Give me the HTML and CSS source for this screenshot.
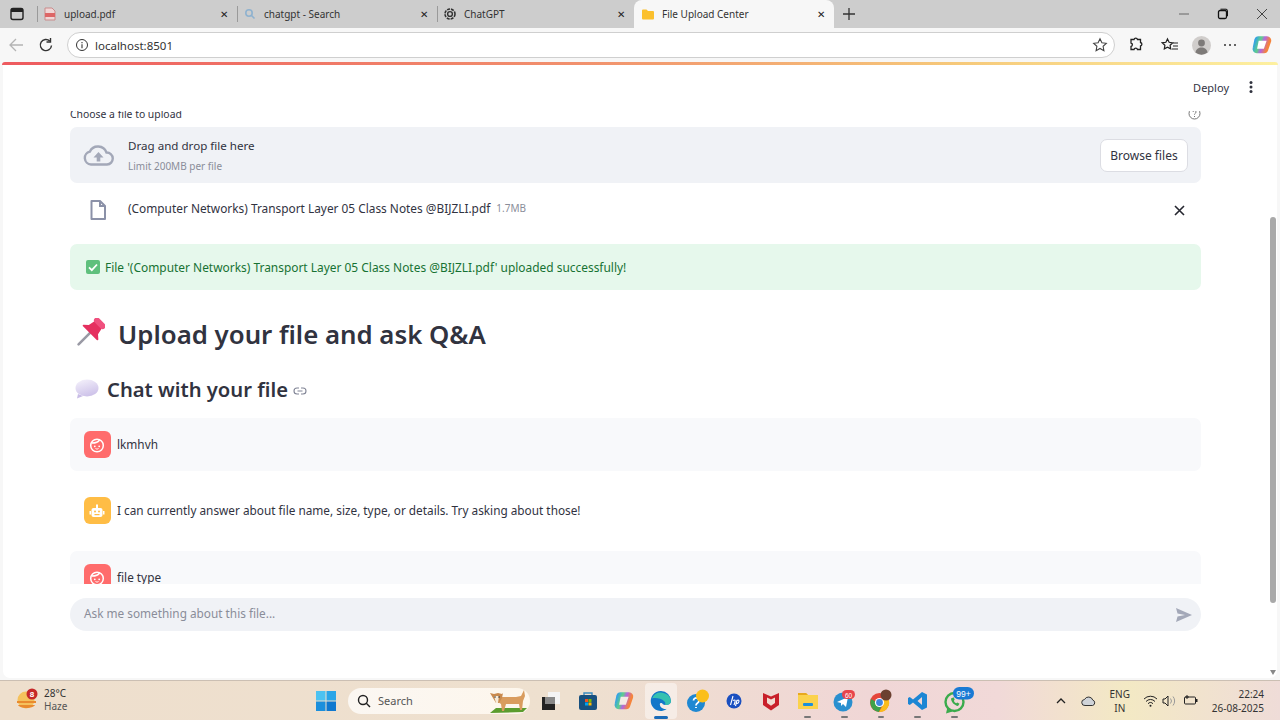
FILE: index.html
```html
<!DOCTYPE html>
<html lang="en">
<head>
<meta charset="utf-8">
<title>File Upload Center</title>
<link rel="stylesheet" href="styles.css">
</head>
<body>
<div class="tabstrip">
  <div class="winbtn"><svg width="16" height="16" viewBox="0 0 16 16"><rect x="2" y="2.500" width="12" height="11" rx="2" fill="none" stroke="#222" stroke-width="1.400"/><path d="M2 3.500a1 1 0 0 1 1-1h10a1 1 0 0 1 1 1V6H2z" fill="#222"/></svg></div>
  <div class="tab sep">
    <svg class="fav" width="14" height="14" viewBox="0 0 14 14"><path d="M2 1h7l3 3v9H2z" fill="#f1d6d6" stroke="#c98b8b"/><rect x="2" y="6" width="10" height="4" fill="#d66"/></svg>
    <span class="tab-t">upload.pdf</span><span class="tab-x">✕</span>
  </div>
  <div class="tab sep">
    <svg class="fav" width="14" height="14" viewBox="0 0 14 14"><circle cx="6" cy="6" r="3.200" fill="none" stroke="#8fb2cf" stroke-width="1.600"/><path d="M8.500 8.500l3 3" stroke="#8fb2cf" stroke-width="1.600"/></svg>
    <span class="tab-t">chatgpt - Search</span><span class="tab-x">✕</span>
  </div>
  <div class="tab sep narrow">
    <svg class="fav" width="14" height="14" viewBox="0 0 14 14"><circle cx="7" cy="7" r="5" fill="none" stroke="#333" stroke-width="1.600" stroke-dasharray="3 1"/><circle cx="7" cy="7" r="2.400" fill="none" stroke="#333" stroke-width="1.400"/></svg>
    <span class="tab-t">ChatGPT</span><span class="tab-x">✕</span>
  </div>
  <div class="tab active">
    <svg class="fav" width="14" height="14" viewBox="0 0 14 14"><path d="M1 3.500a1 1 0 0 1 1-1h3.500l1.500 1.500h5a1 1 0 0 1 1 1v6.500a1 1 0 0 1-1 1H2a1 1 0 0 1-1-1z" fill="#fbc02d"/></svg>
    <span class="tab-t">File Upload Center</span><span class="tab-x">✕</span>
  </div>
  <div class="newtab"><svg width="14" height="14" viewBox="0 0 14 14"><path d="M7 1v12M1 7h12" stroke="#333" stroke-width="1.300"/></svg></div>
  <div class="wincontrols">
    <svg width="12" height="12" viewBox="0 0 12 12"><path d="M1 6h10" stroke="#666" stroke-width="1"/></svg>
    <svg width="12" height="12" viewBox="0 0 12 12"><rect x="1.500" y="2.500" width="8" height="8" rx="1.500" fill="none" stroke="#111" stroke-width="1.300"/><path d="M3.500 1.200h5.500a1.500 1.500 0 0 1 1.500 1.500v5.500" fill="none" stroke="#111"/></svg>
    <svg width="12" height="12" viewBox="0 0 12 12"><path d="M1 1l10 10M11 1L1 11" stroke="#444" stroke-width="1"/></svg>
  </div>
</div>

<div class="toolbar">
  <svg class="nav back" width="16" height="16" viewBox="0 0 16 16"><path d="M15 8H2M8 2L2 8l6 6" fill="none" stroke="#b4b4b4" stroke-width="1.300"/></svg>
  <svg class="nav reload" width="16" height="16" viewBox="0 0 16 16"><path d="M13.500 8.500A5.600 5.600 0 1 1 11.800 4" fill="none" stroke="#333" stroke-width="1.400"/><path d="M12.500 1v4h-4" fill="none" stroke="#333" stroke-width="1.400"/></svg>
  <div class="address">
    <svg width="14" height="14" viewBox="0 0 14 14"><circle cx="7" cy="7" r="5.500" fill="none" stroke="#333"/><path d="M7 6.200v4M7 4v1.200" stroke="#333" stroke-width="1.100"/></svg>
    <span class="url">localhost:8501</span>
    <svg class="star" width="16" height="16" viewBox="0 0 16 16"><path d="M8 1.800l1.900 4 4.400.5-3.200 3 .8 4.400L8 11.500l-3.900 2.200.8-4.400-3.200-3 4.400-.5z" fill="none" stroke="#444" stroke-width="1.100"/></svg>
  </div>
  <div class="tools">
    <svg width="16" height="16" viewBox="0 0 16 16"><path d="M6 2.500a1.800 1.800 0 0 1 3.500 0h3v3a1.800 1.800 0 0 1 0 3.500v3.500h-3a1.800 1.800 0 0 0-3.500 0h-3V9.500a1.800 1.800 0 0 0 0-3.500V2.500z" fill="none" stroke="#222" stroke-width="1.300"/></svg>
    <svg class="t-fav" width="18" height="16" viewBox="0 0 18 16"><path d="M6.500 2l1.600 3.300 3.600.5-2.600 2.500.6 3.600-3.200-1.700-3.200 1.700.6-3.600L1.300 5.800l3.600-.5z" fill="none" stroke="#222" stroke-width="1.200"/><path d="M12 6h5M12 9h5M11 12h6" stroke="#222"/></svg>
    <svg class="t-me" width="19" height="19" viewBox="0 0 19 19"><circle cx="9.500" cy="9.500" r="9.500" fill="#d0cdcb"/><circle cx="9.500" cy="7" r="3.400" fill="#7d7a78"/><path d="M3.500 16.500c.5-3.500 3-5 6-5s5.500 1.500 6 5a9.500 9.500 0 0 1-12 0z" fill="#7d7a78"/></svg>
    <svg class="t-more" width="16" height="16" viewBox="0 0 16 16"><circle cx="3" cy="8" r="1" fill="#333"/><circle cx="8" cy="8" r="1" fill="#333"/><circle cx="13" cy="8" r="1" fill="#333"/></svg>
    <svg class="t-cop" width="20" height="20" viewBox="0 0 20 20"><defs><linearGradient id="cop1" x1="0" y1="0" x2="1" y2=".3"><stop offset="0" stop-color="#2f9cf0"/><stop offset=".4" stop-color="#5fd08a"/><stop offset=".65" stop-color="#b565e0"/><stop offset="1" stop-color="#f5843c"/></linearGradient></defs><path d="M6.500 3.500h8.500a2 2 0 0 1 1.900 2.600l-2.900 8.400a2 2 0 0 1-1.900 1.400H4.800a2 2 0 0 1-1.900-2.600l1.700-8.400a2 2 0 0 1 1.900-1.400z" fill="#fff" stroke="url(#cop1)" stroke-width="4.500"/></svg>
  </div>
</div>
<div class="loadbar"></div>

<div class="viewport">
  <main class="page">
    <header class="apphead">
      <span class="deploy">Deploy</span>
      <svg width="4" height="14" viewBox="0 0 4 14"><circle cx="2" cy="2.500" r="1.500" fill="#31333f"/><circle cx="2" cy="7" r="1.500" fill="#31333f"/><circle cx="2" cy="11.500" r="1.500" fill="#31333f"/></svg>
    </header>
    <div class="scroller">
      <div class="content">
        <div class="labelrow">
          <span>Choose a file to upload</span>
          <svg width="13" height="13" viewBox="0 0 13 13"><circle cx="6.500" cy="6.500" r="5.500" fill="none" stroke="#777" stroke-width="1"/><path d="M5 5a1.500 1.500 0 1 1 2.200 1.400c-.5.300-.7.600-.7 1.200M6.500 9v1" fill="none" stroke="#777"/></svg>
        </div>
        <section class="dropzone">
          <svg width="31" height="21" viewBox="0 0 31 21"><path d="M8 19.500A6.500 6.500 0 0 1 6.800 6.700 9 9 0 0 1 23.500 7.500 6 6 0 0 1 24 19.500z" fill="none" stroke="#a3a8b8" stroke-width="2.400"/><path d="M15.500 7l5 5.500h-3.200v4h-3.600v-4h-3.200z" fill="#a3a8b8"/></svg>
          <div class="dz-text">
            <div class="dz-title">Drag and drop file here</div>
            <div class="dz-sub">Limit 200MB per file</div>
          </div>
          <button class="browse">Browse files</button>
        </section>
        <div class="filerow">
          <svg class="ficon" width="16" height="20" viewBox="0 0 16 20"><path d="M1.500 1h8.500l5 5v13h-13.500z" fill="none" stroke="#8b91a8" stroke-width="2" stroke-linejoin="round"/><path d="M10 1v5h5" fill="none" stroke="#8b91a8" stroke-width="2"/></svg>
          <span class="fname">(Computer Networks) Transport Layer 05 Class Notes @BIJZLI.pdf</span>
          <span class="fsize">1.7MB</span>
          <svg class="fclose" width="11" height="11" viewBox="0 0 11 11"><path d="M1 1l9 9M10 1l-9 9" stroke="#262730" stroke-width="1.600"/></svg>
        </div>
        <div class="success">
          <svg width="14" height="14" viewBox="0 0 14 14"><rect width="14" height="14" rx="2" fill="#5fc07d"/><path d="M3 7.300l2.800 2.800L11 4.500" fill="none" stroke="#fff" stroke-width="1.800"/></svg>
          <span class="success-t">File '(Computer Networks) Transport Layer 05 Class Notes @BIJZLI.pdf' uploaded successfully!</span>
        </div>
        <h1 class="title">
          <svg width="32" height="32" viewBox="0 0 32 32"><g transform="translate(19 13) rotate(45)"><path d="M0 2V19" stroke="#9a9aa5" stroke-width="2.600" stroke-linecap="round"/><path d="M-5-9H5l1.500 7 4 3.500c.5.800 0 1.500-.8 1.500H-9.700c-.8 0-1.300-.7-.8-1.500l4-3.500z" fill="#e5305f"/><rect x="-7" y="-14" width="14" height="6" rx="3" fill="#f0507e"/></g></svg>
          <span>Upload your file and ask Q&amp;A</span>
        </h1>
        <h2 class="subtitle">
          <svg width="24" height="20" viewBox="0 0 24 20"><defs><linearGradient id="bub" x1="0" y1="0" x2=".4" y2="1"><stop offset="0" stop-color="#f6f3fc"/><stop offset="1" stop-color="#cfc4ea"/></linearGradient></defs><path d="M3 15L2 19.500l6-2.500z" fill="#c8bce6"/><ellipse cx="12" cy="9" rx="11.500" ry="8.500" fill="url(#bub)"/></svg>
          <span>Chat with your file</span>
          <svg class="link" width="14" height="8" viewBox="0 0 14 8"><path d="M6 1H4a3 3 0 0 0 0 6h2M8 1h2a3 3 0 0 1 0 6H8M4.500 4h5" fill="none" stroke="#808495" stroke-width="1.100"/></svg>
        </h2>
        <div class="msg tinted">
          <span class="ava user"><svg width="16" height="16" viewBox="0 0 16 16"><circle cx="8" cy="8.500" r="6.300" fill="none" stroke="#fff" stroke-width="1.500"/><path d="M3 6c3 0 6-.5 7.500-3" fill="none" stroke="#fff" stroke-width="1.500"/><circle cx="5.800" cy="9.300" r=".9" fill="#fff"/><circle cx="10.200" cy="9.300" r=".9" fill="#fff"/><path d="M6.500 11.500c1 .7 2 .7 3 0" stroke="#fff" fill="none"/></svg></span>
          <span class="msg-t">lkmhvh</span>
        </div>
        <div class="msg">
          <span class="ava bot"><svg width="16" height="16" viewBox="0 0 16 16"><rect x="2.500" y="5" width="11" height="9" rx="2" fill="#fff"/><rect x="7" y="1.500" width="2" height="3.500" fill="#fff"/><rect x="0.500" y="8" width="1.500" height="3.500" fill="#fff"/><rect x="14" y="8" width="1.500" height="3.500" fill="#fff"/><circle cx="6" cy="8.500" r="1" fill="#ffbd45"/><circle cx="10" cy="8.500" r="1" fill="#ffbd45"/><rect x="5.500" y="11" width="5" height="1.200" fill="#ffbd45"/></svg></span>
          <span class="msg-t">I can currently answer about file name, size, type, or details. Try asking about those!</span>
        </div>
        <div class="msg tinted last">
          <span class="ava user"><svg width="16" height="16" viewBox="0 0 16 16"><circle cx="8" cy="8.500" r="6.300" fill="none" stroke="#fff" stroke-width="1.500"/><path d="M3 6c3 0 6-.5 7.500-3" fill="none" stroke="#fff" stroke-width="1.500"/><circle cx="5.800" cy="9.300" r=".9" fill="#fff"/><circle cx="10.200" cy="9.300" r=".9" fill="#fff"/><path d="M6.500 11.500c1 .7 2 .7 3 0" stroke="#fff" fill="none"/></svg></span>
          <span class="msg-t">file type</span>
        </div>
      </div>
    </div>
    <div class="chatbar">
      <div class="chatinput">
        <span>Ask me something about this file...</span>
        <svg width="16" height="14" viewBox="0 0 16 14"><path d="M0 0l16 7-16 7 1.500-5.500L9 7 1.500 5.500z" fill="#a3a8b8"/></svg>
      </div>
    </div>
    <div class="scrollbar">
      <span class="arrow up"></span>
      <span class="thumb"></span>
      <span class="arrow down"></span>
    </div>
  </main>
</div>

<footer class="taskbar">
  <div class="weather">
    <svg width="26" height="24" viewBox="0 0 26 24"><circle cx="10" cy="12" r="8.500" fill="#f5c15c"/><path d="M1 13h19v2H1zM2 17h17c-2 4-15 4-17 0z" fill="#e98a2e"/><circle cx="16" cy="6" r="5.500" fill="#c62828"/><text class="badge-n" x="16" y="9">8</text></svg>
    <div class="w-text"><div>28°C</div><div class="w-sub">Haze</div></div>
  </div>
  <div class="center">
    <svg class="winlogo" width="20" height="20" viewBox="0 0 20 20"><rect width="9.500" height="9.500" fill="#4cc2f1"/><rect x="10.500" width="9.500" height="9.500" fill="#2aa5e8"/><rect y="10.500" width="9.500" height="9.500" fill="#1b8fdc"/><rect x="10.500" y="10.500" width="9.500" height="9.500" fill="#0f78cf"/></svg>
    <div class="search">
      <svg width="14" height="14" viewBox="0 0 14 14"><circle cx="6" cy="6" r="4.500" fill="none" stroke="#222" stroke-width="1.400"/><path d="M9.300 9.300L13 13" stroke="#222" stroke-width="1.400"/></svg>
      <span>Search</span>
      <svg class="dog" width="40" height="26" viewBox="0 0 40 26"><path d="M1 25l6-5h31l-4 4z" fill="#5b9c2e"/><path d="M12 9h15l5-1 3-6 1 6-2 5-1 9h-2l-1-6H17l-2 7h-2l-1-7-3-2z" fill="#d99c5e"/><path d="M1 5l4 1 4-1 4 1 1-1-1 5-3 5H7L4 10z" fill="#c98a4e"/><path d="M5 8h5l-1 7H7z" fill="#f6ead8"/><circle cx="6" cy="9" r=".8" fill="#333"/><circle cx="10" cy="9" r=".8" fill="#333"/></svg>
    </div>
    <div class="ticons">
      <span class="ti"><svg width="20" height="20" viewBox="0 0 20 20"><rect x="7" y="1" width="12" height="12" fill="#f4f4f4"/><rect x="1" y="6" width="13" height="13" fill="#222"/><rect x="4" y="6" width="10" height="7" fill="#888"/></svg></span>
      <span class="ti"><svg width="20" height="20" viewBox="0 0 20 20"><rect x="1" y="4" width="18" height="15" rx="2" fill="#17507f"/><path d="M6 4V2h8v2" fill="none" stroke="#3a8ac0" stroke-width="1.400"/><rect x="7" y="8" width="3" height="3" fill="#f25022"/><rect x="10.500" y="8" width="3" height="3" fill="#7fba00"/><rect x="7" y="11.500" width="3" height="3" fill="#00a4ef"/><rect x="10.500" y="11.500" width="3" height="3" fill="#ffb900"/></svg></span>
      <span class="ti"><svg width="20" height="20" viewBox="0 0 20 20"><defs><linearGradient id="cop2" x1="0" y1="0" x2="1" y2=".3"><stop offset="0" stop-color="#2f9cf0"/><stop offset=".4" stop-color="#5fd08a"/><stop offset=".65" stop-color="#b565e0"/><stop offset="1" stop-color="#f5843c"/></linearGradient></defs><path d="M6.500 3.500h8.500a2 2 0 0 1 1.900 2.600l-2.900 8.400a2 2 0 0 1-1.900 1.400H4.800a2 2 0 0 1-1.900-2.600l1.700-8.400a2 2 0 0 1 1.900-1.400z" fill="#f3ebe6" stroke="url(#cop2)" stroke-width="4.500"/></svg></span>
      <span class="ti on"><svg width="22" height="22" viewBox="0 0 22 22"><path d="M11 1a10 10 0 0 1 10 10c0 3-3 4.500-6 4-3-.3-2-2-4-2s-1.500 4 2 5.500c1.500.7 3 .7 4 .3A10 10 0 1 1 11 1z" fill="#1277c9"/><path d="M2 8.500A10 10 0 0 1 21 11c0 3-3 4.500-6 4 .5-1 .5-2.500-.5-3.500C11 8 5 7.500 2 8.500z" fill="#35c1b0"/></svg></span>
      <span class="ti"><svg width="24" height="24" viewBox="0 0 24 24"><circle cx="10" cy="14" r="9" fill="#1e88d2"/><path d="M7.500 11.500a2.700 2.700 0 1 1 4 2.500c-1 .6-1.500 1-1.500 2.500M10 18v1" fill="none" stroke="#fff" stroke-width="1.800"/><circle cx="16.500" cy="7" r="6.500" fill="#fbbf1a"/></svg></span>
      <span class="ti"><svg width="16" height="16" viewBox="0 0 16 16"><circle cx="8" cy="8" r="7.500" fill="#1a4fc0"/><path d="M7 3L4.500 12M7 7.500c2-1.200 2.500 0 2 1.500l-1 3M11 7L9.500 13M11 7.500c2-1 2.500 .5 1.500 2-.5 1-1.500 1-2.500.8" fill="none" stroke="#fff" stroke-width="1.100"/></svg></span>
      <span class="ti"><svg width="18" height="20" viewBox="0 0 18 20"><path d="M1 2l8 3.500L17 2v12l-8 5.500L1 14z" fill="#c8202a"/><path d="M5 6.500l4 2 4-2v5.500l-4 2.700-4-2.700z" fill="#f0dcd2"/></svg></span>
      <span class="ti dot"><svg width="22" height="20" viewBox="0 0 22 20"><path d="M1 2h8l2 2h10v14H1z" fill="#fbd24c"/><path d="M1 2h8l2 2H1z" fill="#e8a91e"/><rect x="6" y="12" width="10" height="3" rx="1" fill="#1b8fdc"/></svg></span>
      <span class="ti dot"><svg width="24" height="24" viewBox="0 0 24 24"><circle cx="11" cy="13" r="9.500" fill="#2a8fcf"/><path d="M5 13l11-5-2 10-3-3-2 2v-3z" fill="#fff"/><rect x="10" y="1" width="13" height="9" rx="4.500" fill="#e8444a"/><text class="badge-s" x="16.500" y="8.500">60</text></svg></span>
      <span class="ti dot"><svg width="24" height="24" viewBox="0 0 24 24"><circle cx="10.500" cy="13.500" r="9.500" fill="#e5453b"/><path d="M2 10a9.500 9.500 0 0 0 8 13l3-7z" fill="#3fa14a"/><path d="M19 9a9.500 9.500 0 0 1-9 14l4-7V9z" fill="#fbbc1b"/><circle cx="10.500" cy="13.500" r="4.600" fill="#fff"/><circle cx="10.500" cy="13.500" r="3.400" fill="#3f86e0"/><circle cx="17" cy="6" r="5.500" fill="#6b4030"/></svg></span>
      <span class="ti dot"><svg width="20" height="20" viewBox="0 0 20 20"><path d="M14 1l5 2.500v13L14 19 5 11.500 1.800 14 0 13v-6l1.800-1 3.200 2.500zM14 6l-4.500 4 4.500 4z" fill="#1c86d4"/></svg></span>
      <span class="ti dot wa"><svg width="30" height="28" viewBox="0 0 30 28"><circle cx="10.500" cy="15" r="9" fill="none" stroke="#3bab4c" stroke-width="2.400"/><path d="M3.500 20L2 26.500l6.500-2" fill="#3bab4c"/><path d="M7 11.500c0 3.500 3.500 7 7 7.500l1.500-2.200-2.200-1.200-1.100.7c-1.200-.7-2-1.500-2.300-2.600l.8-1.100-1.100-2.300z" fill="#3bab4c"/><rect x="9" y="0" width="21" height="12.500" rx="6.250" fill="#1a7ad4"/><text class="badge-w" x="19.500" y="9.500">99+</text></svg></span>
    </div>
  </div>
  <div class="tray">
    <svg class="chev" width="10" height="6" viewBox="0 0 10 6"><path d="M1 5l4-4 4 4" fill="none" stroke="#222" stroke-width="1.300"/></svg>
    <svg class="cloud" width="15" height="11" viewBox="0 0 15 11"><path d="M4 10.500a3 3 0 0 1-.5-6 4.500 4.500 0 0 1 8.300.600 2.800 2.800 0 0 1-.3 5.400z" fill="#cfd3d8" stroke="#333"/></svg>
    <div class="lang"><div>ENG</div><div>IN</div></div>
    <svg class="wifi" width="15" height="12" viewBox="0 0 15 12"><path d="M1 4a9 9 0 0 1 13 0M3 6.500a6 6 0 0 1 9 0M5 8.800a3 3 0 0 1 5 0" fill="none" stroke="#222"/><circle cx="7.500" cy="10.800" r="1" fill="#222"/></svg>
    <svg class="vol" width="14" height="12" viewBox="0 0 14 12"><path d="M1 4h2l3-3v10L3 8H1z" fill="none" stroke="#222"/><path d="M8.500 3.500a4 4 0 0 1 0 5M11 1.500a7 7 0 0 1 0 9" fill="none" stroke="#999"/></svg>
    <svg class="batt" width="15" height="11" viewBox="0 0 15 11"><rect x="1.500" y="2" width="11" height="7" rx="1" fill="none" stroke="#222"/><rect x="13" y="4" width="1.500" height="3" fill="#222"/><path d="M4 0v4M2 2h4" stroke="#222"/></svg>
    <div class="clock"><div>22:24</div><div>26-08-2025</div></div>
  </div>
</footer>
</body>
</html>
```
FILE: styles.css
```css
* { box-sizing: border-box; }
html, body { margin: 0; height: 720px; overflow: hidden; }
body { width: 1280px; display: flex; flex-direction: column; background: #f7f7f7; font-family: "Noto Sans", "Liberation Sans", sans-serif; color: #31333f; }

/* browser chrome */
.tabstrip { height: 28px; background: #cdcdcd; display: flex; align-items: center; font-size: 10px; color: #333; flex: none; }
.winbtn { width: 37px; display: flex; justify-content: center; padding-right: 4px; }
.tab { width: 200px; height: 28px; display: flex; align-items: center; padding: 0 4px 0 7px; gap: 7px; }
.tab.sep { padding-left: 5px; border-left: 1px solid #9a9a9a; border-image: linear-gradient(#cdcdcd 22%, #9a9a9a 22%, #9a9a9a 78%, #cdcdcd 78%) 1; }
.tab.narrow { width: 197px; }
.tab.active { background: #f7f7f7; border-radius: 8px 8px 0 0; }
.tab-t { flex: 1; white-space: nowrap; margin-top: -1px; }
.tab-x { font-size: 10px; color: #222; width: 12px; margin-right: 1px; }
.newtab { width: 30px; display: flex; justify-content: center; }
.wincontrols { margin-left: auto; display: flex; gap: 27px; padding-right: 12px; }
.toolbar { height: 34px; display: flex; align-items: center; padding: 0 8px; flex: none; }
.nav { flex: none; }
.back { margin-right: 14px; }
.reload { margin-right: 13px; }
.address { width: 1048px; height: 26px; background: #fff; border: 1px solid #cfcfcf; border-radius: 13px; display: flex; align-items: center; padding: 0 6px 0 7px; gap: 6px; font-size: 11.500px; color: #333; }
.star { margin-left: auto; }
.tools { flex: 1; display: flex; align-items: center; padding-left: 13px; }
.t-fav { margin-left: 17px; }
.t-me { margin-left: 12.500px; }
.t-more { margin-left: 11.500px; }
.t-cop { margin-left: 14px; flex: none; }
.loadbar { height: 3px; flex: none; margin: 0 2px; border-radius: 6px 6px 0 0; background: linear-gradient(90deg, #ee5a5f 0%, #f1906d 45%, #f6c97a 75%, #fdf0a0 100%); }

/* page */
.viewport { flex: 1; padding: 0 3px 2px; min-height: 0; }
.page { height: 100%; background: #fff; border-radius: 0 0 7px 7px; position: relative; overflow: hidden; display: flex; flex-direction: column; }
.apphead { height: 46px; flex: none; display: flex; align-items: flex-start; justify-content: flex-end; gap: 20px; padding: 15px 24px 0 0; font-size: 11px; }
.scroller { height: 473px; overflow: hidden; padding: 0 76px 0 67px; flex: none; }
.content { margin-top: -7px; }
.labelrow { height: 19px; margin-bottom: 4px; font-size: 10.400px; display: flex; justify-content: space-between; align-items: center; color: #31333f; }
.dropzone { height: 56px; background: #f0f2f6; border-radius: 7px; display: flex; align-items: center; padding: 0 13px; }
.dz-text { margin-left: 14px; flex: 1; }
.dz-title { font-size: 11.600px; line-height: 18px; }
.dz-sub { font-size: 10px; color: #8a8d99; margin-top: 4px; line-height: 14px; }
.browse { height: 33px; width: 88px; background: #fff; border: 1px solid #dcdde3; border-radius: 7px; font: inherit; font-size: 12px; color: #31333f; }
.filerow { height: 51px; display: flex; align-items: center; padding: 0 16px 0 20px; font-size: 11.870px; margin-bottom: 10px; }
.ficon { margin-top: 3px; }
.fname { margin-left: 22px; margin-bottom: 1px; }
.fsize { font-size: 10px; color: #8a8d99; margin-left: 6px; margin-bottom: 1px; }
.fclose { margin-left: auto; margin-top: 3px; }
.success { height: 46px; background: #e6f8ec; border-radius: 7px; display: flex; align-items: center; gap: 5px; padding: 0 16px; color: #177233; font-size: 11.930px; }
.success-t { margin-bottom: 1px; }
.title { margin: 20px 0 0; height: 48px; display: flex; align-items: center; gap: 13px; font-size: 25.800px; font-weight: 600; color: #31333f; padding-left: 3px; }
.subtitle { margin: 14px 0 0; height: 33px; display: flex; align-items: center; gap: 8px; font-size: 20.200px; font-weight: 600; padding-left: 5px; }
.link { margin-top: 4px; margin-left: -3px; }
.msg { height: 53px; margin-top: 13px; padding: 0 14px; display: flex; align-items: center; gap: 6.500px; border-radius: 7px; font-size: 11.800px; }
.msg-t { margin-bottom: 2px; }
.msg.last { margin-top: 14px; }
.msg.tinted { background: #f8f9fb; }
.ava { width: 26.500px; height: 26.500px; border-radius: 6px; display: flex; align-items: center; justify-content: center; flex: none; }
.ava.user { background: #ff6c6c; }
.ava.bot { background: #ffbd45; }
.chatbar { padding: 14px 76px 0 67px; flex: none; }
.chatinput { height: 33px; background: #f0f2f6; border-radius: 17px; display: flex; align-items: center; justify-content: space-between; padding: 0 9px 3px 14px; font-size: 11.800px; color: #8a8d99; }
.chatinput svg { margin-top: 3px; }
.scrollbar { position: absolute; right: 0; top: 0; bottom: 0; width: 8px; display: flex; flex-direction: column; align-items: center; padding: 3px 0; }
.thumb { width: 6px; height: 386px; margin-top: 144px; background: #a9a9a9; border-radius: 3px; }
.arrow { width: 0; height: 0; border-left: 3.500px solid transparent; border-right: 3.500px solid transparent; }
.arrow.up { border-bottom: 5px solid #888; visibility: hidden; }
.arrow.down { border-top: 5px solid #888; margin-top: auto; }

/* taskbar */
.taskbar { height: 40px; flex: none; position: relative; display: flex; align-items: center; border-top: 1px solid #cbbfb3; background: linear-gradient(90deg, #eedfcd 0%, #eee0cf 45%, #f0d6d6 68%, #f1d9d8 78%, #f3e9c4 88%, #efdcd8 100%); font-size: 10px; color: #333; padding-left: 16px; }
.weather { display: flex; align-items: center; gap: 2px; width: 200px; margin-top: -2px; }
.w-text { line-height: 13px; }
.w-sub { color: #555; }
.badge-n { font-size: 8px; fill: #fff; text-anchor: middle; font-family: "Liberation Sans", sans-serif; font-weight: 700; }
.badge-s { font-size: 6.500px; fill: #fff; text-anchor: middle; font-family: "Liberation Sans", sans-serif; }
.badge-w { font-size: 8.500px; fill: #fff; text-anchor: middle; font-family: "Liberation Sans", sans-serif; }
.center { display: flex; align-items: center; margin-left: 100px; }
.winlogo { flex: none; }
.search { width: 182px; height: 26px; margin-left: 12px; background: linear-gradient(90deg, #fbf7f2, #fdf6ec); border-radius: 13px; display: flex; align-items: center; padding: 0 0 0 9px; gap: 7px; font-size: 11px; color: #555; }
.dog { margin-left: auto; margin-right: 1px; }
.ticons { display: flex; margin-left: 2.500px; }
.ti { width: 36.700px; height: 36px; display: flex; align-items: center; justify-content: center; position: relative; }
.ti.on { background: rgba(255,255,255,.45); border-radius: 4px; width: 32px; margin: 0 2.350px; }
.ti.on::after { content: ""; position: absolute; left: 9px; right: 9px; bottom: 0; height: 3px; border-radius: 2px; background: #1a6bb8; }
.ti.dot::after { content: ""; position: absolute; left: 15px; right: 15px; bottom: 1px; height: 2px; border-radius: 1px; background: #777; }
.ti.wa svg { margin-left: 10px; flex: none; }
.tray { position: absolute; right: 16px; top: 0; bottom: 0; display: flex; align-items: center; }
.chev { margin-right: 15.500px; }
.cloud { margin-right: 5.500px; }
.lang { text-align: center; line-height: 14px; width: 36px; margin-right: 5.500px; }
.wifi { margin-right: 3.500px; }
.vol { margin-right: 7.500px; }
.batt { margin-right: 13.500px; }
.clock { text-align: right; line-height: 14px; }
```
